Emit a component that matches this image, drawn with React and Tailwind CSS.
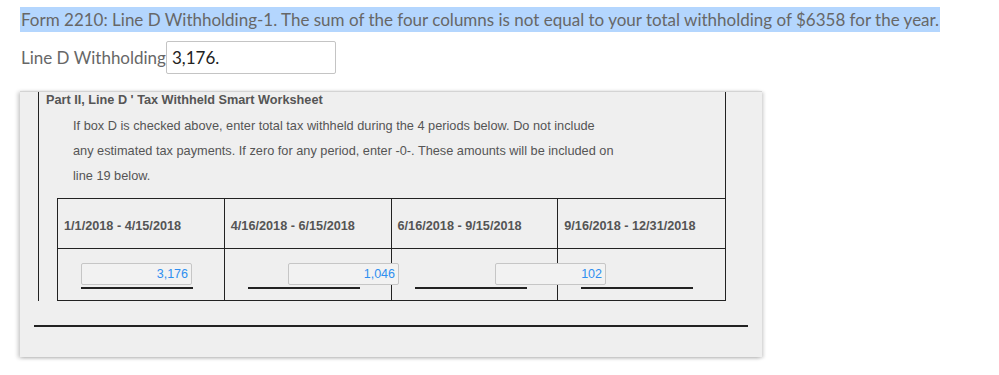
export default function App() {
  const heads = [
    "1/1/2018 - 4/15/2018",
    "4/16/2018 - 6/15/2018",
    "6/16/2018 - 9/15/2018",
    "9/16/2018 - 12/31/2018",
  ];
  const vals = ["3,176", "1,046", "102"];
  return (
    <div className="w-[999px] h-[375px] bg-white overflow-hidden font-['Lato',sans-serif]">
      <div className="pt-[7px] pl-[20px]">
        <div className="inline-block bg-[#b4d6fe] h-[25px] leading-[25px] text-[17px] text-[#676767] pl-[1px] pr-[1px]">
          Form 2210: Line D Withholding-1. The sum of the four columns is not equal to your total withholding of $6358 for the year.
        </div>
      </div>
      <div className="flex items-center mt-[9px] ml-[21px] h-[33px]">
        <span className="text-[17px] text-[#676767]">Line D Withholding</span>
        <div className="w-[170px] h-[33px] border border-[#c4c4c4] rounded-[2px] bg-white text-[17px] text-[#222] leading-[31px] pl-[5px]">
          3,176.
        </div>
      </div>
      <div className="mt-[17px] ml-[20px] w-[742px] h-[266px] bg-[#efefef] border-t border-[#d4d4d4] shadow-[-2px_1px_4px_rgba(0,0,0,0.22),2px_1px_3px_rgba(0,0,0,0.14)] font-['Liberation_Sans',Arial,sans-serif]">
        <div className="ml-[18px] w-[688px] border-l-[1.5px] border-r-[1.5px] border-[#222]">
          <div className="pl-[7px] text-[12.7px] font-bold text-[#555] leading-[16px]">
            Part II, Line D ' Tax Withheld Smart Worksheet
          </div>
          <div className="pl-[34px] mt-[5px] text-[12.75px] text-[#555] leading-[25px]">
            <div>If box D is checked above, enter total tax withheld during the 4 periods below. Do not include</div>
            <div>any estimated tax payments. If zero for any period, enter -0-. These amounts will be included on</div>
            <div>line 19 below.</div>
          </div>
          <div className="ml-[18px] mt-[10px] border-t-[1.5px] border-l-[1.5px] border-b-[1.5px] border-[#222]">
            <div className="grid grid-cols-4 h-[50px] border-b-[1.5px] border-[#222]">
              {heads.map((h, i) => (
                <div
                  key={h}
                  className={`pl-[6px] pt-[19px] text-[12.7px] font-bold text-[#555] leading-[16px] ${i < 3 ? "border-r-[1.5px] border-[#222]" : ""}`}
                >
                  {h}
                </div>
              ))}
            </div>
            <div className="relative grid grid-cols-4 h-[51px]">
              {heads.map((h, i) => (
                <div
                  key={h}
                  className={`pt-[38px] ${i < 3 ? "border-r-[1.5px] border-[#222]" : ""}`}
                >
                  <div className="ml-[23px] w-[112px] h-[1.5px] bg-[#222]" />
                </div>
              ))}
              <div className="absolute left-[23px] top-[14px] flex gap-[96px]">
                {vals.map((v) => (
                  <div
                    key={v}
                    className="w-[111px] h-[22px] bg-[#f2f2f2] border border-[#c6c6c6] rounded-[2px] text-right pr-[3px] text-[12.5px] leading-[20px] text-[#2f8ff0]"
                  >
                    {v}
                  </div>
                ))}
              </div>
            </div>
          </div>
        </div>
        <div className="ml-[14px] mt-[24px] w-[714px] h-[1.5px] bg-[#222]" />
      </div>
    </div>
  );
}
